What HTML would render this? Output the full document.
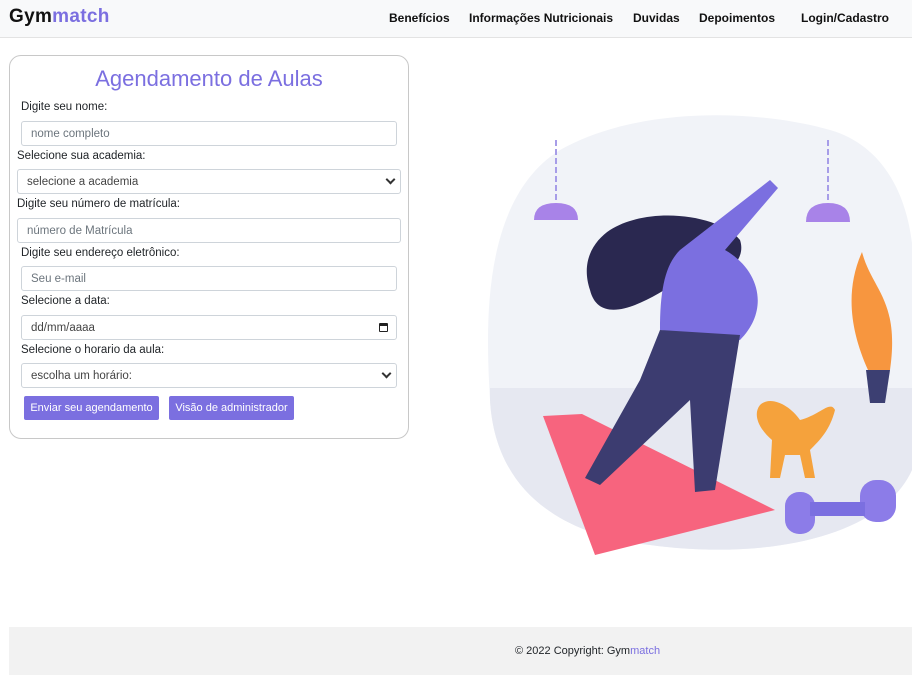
<!DOCTYPE html>
<html><head><meta charset="utf-8"><style>
*{box-sizing:border-box;margin:0;padding:0}
body{width:912px;height:679px;background:#fff;font-family:"Liberation Sans",Arial,sans-serif;position:relative;overflow:hidden;color:#212529}
.nav{position:absolute;left:0;top:0;width:912px;height:38px;background:#f8f9fa;border-bottom:1px solid #e3e3e3}
.logo{position:absolute;left:9px;top:6px;font-size:19px;font-weight:bold;color:#111;letter-spacing:.3px}
.logo span{color:#7b6fe0}
.nav a{position:absolute;top:11px;font-size:12px;font-weight:bold;color:#111;text-decoration:none}
.card{position:absolute;left:9px;top:55px;width:400px;height:384px;border:1px solid #c8c8c8;border-radius:12px}
h1{position:absolute;left:0;width:100%;top:10px;text-align:center;font-weight:normal;font-size:22px;color:#7b6fe0}
.l{position:absolute;font-size:11.5px;color:#212529}
.f{position:absolute;height:25px;border:1px solid #ced4da;border-radius:3px;font-size:11.5px;color:#6c757d;padding:6px 9px;background:#fff}
.f.s{color:#444}
.chev{position:absolute;right:6px;top:6px;width:7px;height:7px;border-right:2px solid #333;border-bottom:2px solid #333;transform:rotate(45deg)}
.btn{position:absolute;top:340px;height:24px;background:#7b6fe0;color:#fff;font-size:11px;border-radius:2px;padding:6px 0;text-align:center}
.foot{position:absolute;left:9px;top:627px;width:903px;height:48px;background:#f2f2f2;font-size:11px}
.foot div{position:absolute;left:506px;top:18px}
.foot span{color:#7b6fe0}
</style></head><body>
<div class="nav">
<div class="logo">Gym<span>match</span></div>
<a style="left:389px">Benefícios</a>
<a style="left:469px">Informações Nutricionais</a>
<a style="left:633px">Duvidas</a>
<a style="left:699px">Depoimentos</a>
<a style="left:801px">Login/Cadastro</a>
</div>
<div class="card">
<h1>Agendamento de Aulas</h1>
<div class="l" style="left:11px;top:45px">Digite seu nome:</div>
<div class="f" style="left:11px;top:65px;width:376px">nome completo</div>
<div class="l" style="left:7px;top:94px">Selecione sua academia:</div>
<div class="f s" style="left:7px;top:113px;width:384px">selecione a academia<i class="chev"></i></div>
<div class="l" style="left:7px;top:142px">Digite seu número de matrícula:</div>
<div class="f" style="left:7px;top:162px;width:384px">número de Matrícula</div>
<div class="l" style="left:11px;top:191px">Digite seu endereço eletrônico:</div>
<div class="f" style="left:11px;top:210px;width:376px">Seu e-mail</div>
<div class="l" style="left:11px;top:239px">Selecione a data:</div>
<div class="f s" style="left:11px;top:259px;width:376px">dd/mm/aaaa<i style="position:absolute;right:8px;top:7px;width:9px;height:9px;border:1.5px solid #222;border-top-width:3px;border-radius:1px"></i></div>
<div class="l" style="left:11px;top:288px">Selecione o horario da aula:</div>
<div class="f s" style="left:11px;top:307px;width:376px">escolha um horário:<i class="chev"></i></div>
<div class="btn" style="left:14px;width:135px">Enviar seu agendamento</div>
<div class="btn" style="left:159px;width:125px">Visão de administrador</div>
</div>
<svg style="position:absolute;left:470px;top:110px" width="442" height="460" viewBox="470 110 442 460">
<path d="M560 150 C640 105 760 110 830 130 C900 150 920 230 912 300 L912 470 C880 540 760 560 650 545 C560 535 495 490 490 400 C486 330 480 200 560 150Z" fill="#f1f3f8"/>
<path d="M490 388 L912 388 L912 470 C880 540 760 560 650 545 C560 535 495 490 490 400Z" fill="#e6e8f1"/>
<line x1="556" y1="140" x2="556" y2="200" stroke="#a79de8" stroke-width="2" stroke-dasharray="6 3"/>
<path d="M534 220 Q534 203 556 203 Q578 203 578 220Z" fill="#a883e8"/>
<line x1="828" y1="140" x2="828" y2="200" stroke="#a79de8" stroke-width="2" stroke-dasharray="6 3"/>
<path d="M806 222 Q806 203 828 203 Q850 203 850 222Z" fill="#a883e8"/>
<polygon points="543,416 582,414 775,510 595,555" fill="#f7647e"/>
<path d="M868 370 C850 330 845 290 862 252 C872 290 900 300 890 370Z" fill="#f7963f"/>
<polygon points="866,370 890,370 885,403 870,403" fill="#3c3f72"/>
<path d="M610 230 C650 205 720 215 740 240 C750 270 700 290 680 280 C650 300 600 330 590 290 C580 260 595 240 610 230Z" fill="#2a2850"/>
<path d="M680 250 L770 180 L778 188 L725 250 C760 270 770 310 740 340 L660 330 C660 290 665 265 680 250Z" fill="#7b6fe0"/>
<path d="M660 330 L740 335 L715 490 L695 492 L690 400 L600 485 L585 478 L640 380Z" fill="#3c3c70"/>
<path d="M760 405 C770 395 790 405 800 420 C820 415 830 400 835 410 C830 430 820 440 810 450 L815 478 L805 478 L800 455 L785 455 L780 478 L770 478 L772 440 C760 430 752 415 760 405Z" fill="#f5a23c"/>
<rect x="785" y="492" width="30" height="42" rx="14" fill="#8c7ce8"/>
<rect x="860" y="480" width="36" height="42" rx="16" fill="#8c7ce8"/>
<rect x="810" y="502" width="55" height="14" fill="#7b6fe0"/>
</svg>
<div class="foot"><div>© 2022 Copyright: Gym<span>match</span></div></div>
</body></html>
